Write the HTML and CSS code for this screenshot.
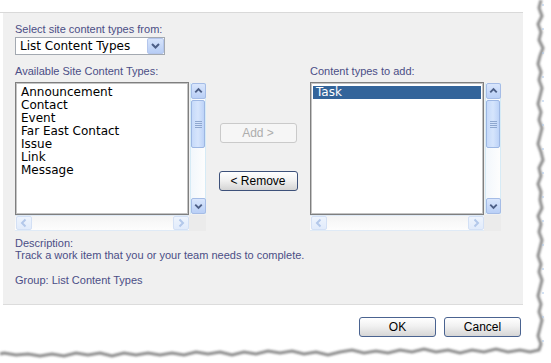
FILE: index.html
```html
<!DOCTYPE html>
<html lang="en">
<head>
    <meta charset="UTF-8">
    <meta name="viewport" content="width=device-width, initial-scale=1.0">
    <title>Select Content Types</title>
    <link rel="stylesheet" href="styles.css">
</head>
<body>
    <div class="dialog">
        <div class="panel">
            <p class="label">Select site content types from:</p>
            <div class="select">
                <span class="select-text">List Content Types</span>
                <span class="select-btn">
                    <svg width="15" height="14" viewBox="0 0 15 14"><polyline points="4,5 7.5,8.5 11,5" fill="none" stroke="#4d5f86" stroke-width="2"/></svg>
                </span>
            </div>

            <div class="columns">
                <div class="col">
                    <p class="label">Available Site Content Types:</p>
                    <div class="listbox">
                        <ul class="list">
                            <li>Announcement</li>
                            <li>Contact</li>
                            <li>Event</li>
                            <li>Far East Contact</li>
                            <li>Issue</li>
                            <li>Link</li>
                            <li>Message</li>
                        </ul>
                        <div class="vscroll">
                            <span class="sb-btn"><svg width="14" height="14" viewBox="0 0 14 14"><polyline points="3.5,8.5 7,5 10.5,8.5" fill="none" stroke="#4d5f86" stroke-width="2"/></svg></span>
                            <span class="thumb"><i></i><i></i><i></i><i></i></span>
                            <span class="track"></span>
                            <span class="sb-btn"><svg width="14" height="14" viewBox="0 0 14 14"><polyline points="3.5,5.5 7,9 10.5,5.5" fill="none" stroke="#4d5f86" stroke-width="2"/></svg></span>
                        </div>
                        <div class="hscroll">
                            <span class="sb-btn pale"><svg width="14" height="14" viewBox="0 0 14 14"><polyline points="8.5,3.5 5,7 8.5,10.5" fill="none" stroke="#b3c8ea" stroke-width="2"/></svg></span>
                            <span class="htrack"></span>
                            <span class="sb-btn pale"><svg width="14" height="14" viewBox="0 0 14 14"><polyline points="5.5,3.5 9,7 5.5,10.5" fill="none" stroke="#b3c8ea" stroke-width="2"/></svg></span>
                        </div>
                        <div class="corner"></div>
                    </div>
                </div>

                <div class="mid">
                    <button class="btn btn-disabled">Add &gt;</button>
                    <button class="btn btn-remove">&lt; Remove</button>
                </div>

                <div class="col">
                    <p class="label">Content types to add:</p>
                    <div class="listbox">
                        <ul class="list">
                            <li class="selected">Task</li>
                        </ul>
                        <div class="vscroll">
                            <span class="sb-btn"><svg width="14" height="14" viewBox="0 0 14 14"><polyline points="3.5,8.5 7,5 10.5,8.5" fill="none" stroke="#4d5f86" stroke-width="2"/></svg></span>
                            <span class="thumb"><i></i><i></i><i></i><i></i></span>
                            <span class="track"></span>
                            <span class="sb-btn"><svg width="14" height="14" viewBox="0 0 14 14"><polyline points="3.5,5.5 7,9 10.5,5.5" fill="none" stroke="#4d5f86" stroke-width="2"/></svg></span>
                        </div>
                        <div class="hscroll">
                            <span class="sb-btn pale"><svg width="14" height="14" viewBox="0 0 14 14"><polyline points="8.5,3.5 5,7 8.5,10.5" fill="none" stroke="#b3c8ea" stroke-width="2"/></svg></span>
                            <span class="htrack"></span>
                            <span class="sb-btn pale"><svg width="14" height="14" viewBox="0 0 14 14"><polyline points="5.5,3.5 9,7 5.5,10.5" fill="none" stroke="#b3c8ea" stroke-width="2"/></svg></span>
                        </div>
                        <div class="corner"></div>
                    </div>
                </div>
            </div>

            <div class="desc">
                <p>Description:</p>
                <p>Track a work item that you or your team needs to complete.</p>
                <p class="group">Group: List Content Types</p>
            </div>
        </div>

        <div class="footer">
            <button class="btn btn-ok">OK</button>
            <button class="btn btn-ok">Cancel</button>
        </div>
    </div>

    <!-- torn paper edge -->
    <svg class="torn" width="551" height="363" viewBox="0 0 551 363">
        <defs>
            <filter id="soft" x="-5%" y="-5%" width="110%" height="110%">
                <feGaussianBlur stdDeviation="0.8"/>
            </filter>
        </defs>
        <polyline filter="url(#soft)" fill="none" stroke="#8c8c8c" stroke-width="3"
            points="541,0 539,8 542,16 538,24 541,32 539,40 543,48 540,56 538,64 541,72 539,80 542,88 540,96 538,104 541,112 539,120 542,128 540,136 538,144 541,152 543,160 539,168 541,176 538,184 541,192 540,200 542,208 538,216 541,224 539,232 542,240 540,248 538,256 541,264 539,272 542,280 540,288 538,296 541,304 539,312 542,320 540,328 538,336 541,344 539,350 530,352 520,350 508,352 496,349 484,352 472,350 460,353 448,350 436,352 424,349 412,352 400,350 388,353 376,351 364,353 352,350 340,352 328,355 316,352 304,354 292,351 280,353 268,351 256,354 244,352 232,355 220,352 208,354 196,352 184,355 172,353 160,355 148,353 136,355 124,353 112,356 100,353 88,355 76,353 64,356 52,354 40,356 28,354 16,355 4,353 0,354"/>
        <line x1="543" y1="4" x2="543" y2="344" stroke="#a9c6ea" stroke-width="1" stroke-dasharray="2 22"/>
    </svg>
</body>
</html>
```

FILE: styles.css
```css
*{
    margin: 0;
    padding: 0;
    box-sizing: border-box;
}
body{
    width: 551px;
    height: 363px;
    overflow: hidden;
    position: relative;
    background-color: #fff;
    font-family: "Liberation Sans", Arial, sans-serif;
    font-size: 11px;
}
.dialog{
    width: 523px;
    margin-top: 12px;
    border-top: 1px solid #d9d9d9;
}
.panel{
    margin-left: 3px;
    height: 292px;
    padding: 10px 0 0 12px;
    background-color: #f0f0f0;
    border-bottom: 1px solid #dcdcdc;
}
.label{
    line-height: 13px;
    color: #4b4e86;
}
.select{
    margin-top: 1px;
    width: 150px;
    height: 18px;
    display: flex;
    align-items: center;
    background-color: #fff;
    border: 1px solid #a3a9b1;
}
.select-text{
    flex: 1;
    padding-left: 4px;
    font-family: "DejaVu Sans", sans-serif;
    font-size: 12px;
    color: #000;
}
.select-btn{
    width: 17px;
    height: 16px;
    display: flex;
    align-items: center;
    justify-content: center;
    background: linear-gradient(#d7e4fb, #b7cdf5);
    border: 1px solid #b4c6ec;
    border-radius: 2px;
}
.columns{
    display: flex;
    margin-top: 10px;
}
.col{
    width: 191px;
}
.col .label{
    margin-bottom: 4px;
}
.listbox{
    width: 191px;
    height: 149px;
    display: grid;
    grid-template-columns: 174px 17px;
    grid-template-rows: 133px 16px;
}
.list{
    list-style: none;
    background-color: #fff;
    border: 1px solid #7f7f7f;
    box-shadow: inset 1px 1px 0 #c4c4c4, inset -1px -1px 0 #c4c4c4;
    padding: 3px 2px 2px;
    font-family: "DejaVu Sans", sans-serif;
    font-size: 12px;
    line-height: 13px;
    color: #000;
}
.list li{
    padding-left: 3px;
}
.list .selected{
    background-color: #33649a;
    color: #fff;
}
.vscroll{
    margin: 1px 0 1px 1px;
    width: 16px;
    display: flex;
    flex-direction: column;
    background: linear-gradient(90deg, #f2f7fc, #fdfdfd);
    border-left: 1px solid #d6ebf6;
    border-right: 1px solid #d6ebf6;
}
.sb-btn{
    width: 15px;
    height: 16px;
    display: flex;
    align-items: center;
    justify-content: center;
    background: linear-gradient(#d9e6fc, #b9cff6);
    border: 1px solid #a5bce6;
    border-radius: 2px;
    flex-shrink: 0;
}
.sb-btn.pale{
    background: linear-gradient(#eef4fd, #e1ebfb);
    border-color: #d3e0f5;
}
.thumb{
    height: 48px;
    margin-top: 1px;
    display: flex;
    flex-direction: column;
    align-items: center;
    justify-content: center;
    gap: 1px;
    background: linear-gradient(90deg, #c6dafa, #d6e5fc 50%, #bdd3f8);
    border: 1px solid #9db7e3;
    border-radius: 2px;
}
.thumb i{
    width: 7px;
    height: 1px;
    background-color: #8ea7cf;
}
.track{
    flex: 1;
}
.hscroll{
    display: flex;
    align-items: center;
    padding-left: 1px;
    background: linear-gradient(#f4f4f4, #fdfdfd);
    border-top: 1px solid #dfeaf6;
    border-bottom: 1px solid #dfeaf6;
}
.hscroll .sb-btn{
    width: 16px;
    height: 14px;
}
.htrack{
    flex: 1;
}
.corner{
    background-color: #ebebeb;
}
.mid{
    width: 78px;
    margin: 0 13px 0 13px;
    padding-top: 58px;
    display: flex;
    flex-direction: column;
    align-items: center;
}
.btn{
    height: 20px;
    font-family: "Liberation Sans", Arial, sans-serif;
    font-size: 11px;
    border-radius: 3px;
}
.btn-disabled{
    width: 77px;
    font-size: 12px;
    color: #adadad;
    background-color: #f6f6f6;
    border: 1px solid #cacaca;
}
.btn-remove{
    width: 79px;
    margin-top: 28px;
    font-size: 12px;
    color: #000;
    border: 1px solid #3d517a;
    background: linear-gradient(#ffffff, #f2f2f2 45%, #d4d4d4);
}
.desc{
    margin-top: 6px;
    line-height: 12px;
    color: #4b4e86;
}
.desc .group{
    margin-top: 13px;
}
.footer{
    display: flex;
    justify-content: flex-end;
    gap: 8px;
    padding-top: 12px;
    padding-right: 2px;
}
.btn-ok{
    width: 77px;
    font-size: 12px;
    color: #000;
    border: 1px solid #4a6390;
    background: linear-gradient(#ffffff, #f1f1f1 45%, #d6d6d6);
}
.torn{
    position: absolute;
    left: 0;
    top: 0;
    pointer-events: none;
}
```
